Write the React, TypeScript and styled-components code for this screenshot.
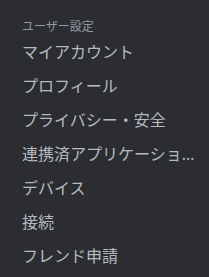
import styled, { createGlobalStyle } from "styled-components";

const GlobalStyle = createGlobalStyle`
    html, body {
        margin: 0;
        padding: 0;
        background: #2b2d31;
    }
    body {
        font-family: "Noto Sans", "Noto Sans CJK JP", sans-serif;
    }
`;

const Sidebar = styled.nav`
    width: 209px;
    height: 277px;
    box-sizing: border-box;
    padding: 10px 4px 0 12px;
    background: #2b2d31;
    overflow: hidden;
`;

const Header = styled.div`
    padding: 9px 10px 0;
    font-size: 12px;
    line-height: 16px;
    font-weight: 400;
    color: #949ba4;
`;

const Item = styled.div<{ $selected?: boolean }>`
    height: 32px;
    margin-bottom: 2px;
    padding: 0 10px;
    display: flex;
    align-items: center;
    border-radius: 4px;
    font-size: 16px;
    font-weight: 400;
    color: ${({ $selected }) => ($selected ? "#f2f3f5" : "#b5bac1")};
    background: ${({ $selected }) => ($selected ? "#404249" : "transparent")};
    cursor: pointer;

    span {
        white-space: nowrap;
        overflow: hidden;
        text-overflow: ellipsis;
    }
`;

const items = [
    "マイアカウント",
    "プロフィール",
    "プライバシー・安全",
    "連携済アプリケーション",
    "デバイス",
    "接続",
    "フレンド申請",
];

export default function App() {
    return (
        <>
            <GlobalStyle />
            <Sidebar>
                <Header>ユーザー設定</Header>
                {items.map((label) => (
                    <Item key={label}>
                        <span>{label}</span>
                    </Item>
                ))}
            </Sidebar>
        </>
    );
}
